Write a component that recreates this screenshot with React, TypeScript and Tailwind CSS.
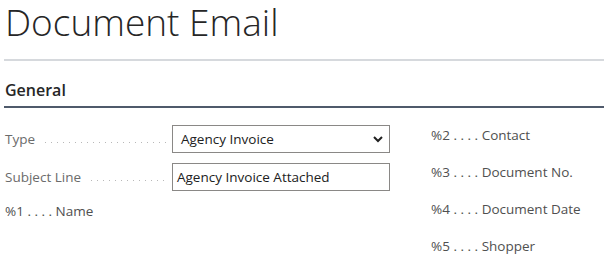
import React from "react";

const font = { fontFamily: '"Open Sans", "Noto Sans", sans-serif' };

const Leader = () => (
  <span className="flex-1 h-px ml-[10px] mr-[6px] mt-[6px] bg-[linear-gradient(to_right,#b8b8b8_1px,transparent_1px)] bg-[length:6px_1px]" />
);

const FieldRow = ({ label, children }: { label: string; children: React.ReactNode }) => (
  <div className="flex items-center h-[28px]">
    <div className="w-[167px] flex items-center">
      <span className="text-[#6b6b6b] text-[13.5px]">{label}</span>
      <Leader />
    </div>
    <div className="w-[218px]">{children}</div>
  </div>
);

const Placeholder = ({ code, name }: { code: string; name: string }) => (
  <div className="h-[37px] flex items-center text-[13.5px] text-[#505050] whitespace-pre">
    {code} . . . . {name}
  </div>
);

const App = () => {
  return (
    <div className="w-[604px] h-[272px] bg-white overflow-hidden pl-[4px] pt-[2px]" style={font}>
      <h1 className="text-[37px] font-light text-[#262626] leading-[40px] pl-[1px]">
        Document Email
      </h1>
      <div className="mt-[17px] h-[2px] bg-[#d6d9dd]" />

      <div className="mt-[19px] pb-[6px] border-b-2 border-[#4f5a6b]">
        <h2 className="text-[16px] font-semibold text-[#262626] leading-[20px] pl-[1px]">General</h2>
      </div>

      <div className="flex mt-[17px] pl-[1px]">
        <div className="w-[386px] flex flex-col gap-[10px]">
          <FieldRow label="Type">
            <div className="relative h-[28px] border border-[#8a8886] flex items-center pl-[8px] text-[13.5px] text-[#212121]">
              Agency Invoice
              <svg
                className="absolute right-[6px] top-[9px]"
                width="10"
                height="8"
                viewBox="0 0 10 8"
              >
                <path d="M1 2 L5 6 L9 2" stroke="#212121" strokeWidth="2" fill="none" />
              </svg>
            </div>
          </FieldRow>
          <FieldRow label="Subject Line">
            <div className="h-[28px] border border-[#8a8886] flex items-center pl-[4px] text-[13.5px] text-[#212121]">
              Agency Invoice Attached
            </div>
          </FieldRow>
          <div className="h-[22px] flex items-center text-[13.5px] text-[#505050] whitespace-pre -mt-[1px]">
            %1 . . . . Name
          </div>
        </div>

        <div className="ml-[40px] -mt-[8px] flex flex-col">
          <Placeholder code="%2" name="Contact" />
          <Placeholder code="%3" name="Document No." />
          <Placeholder code="%4" name="Document Date" />
          <Placeholder code="%5" name="Shopper" />
        </div>
      </div>
    </div>
  );
};

export default App;
